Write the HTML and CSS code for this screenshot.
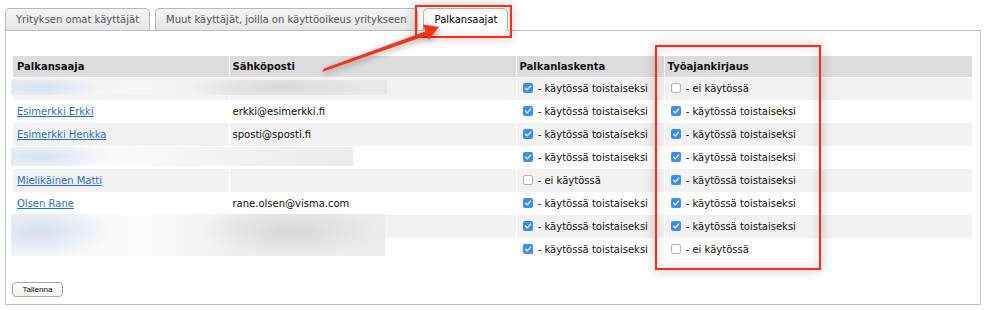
FILE: index.html
```html
<!DOCTYPE html>
<html lang="fi">
<head>
  <meta charset="UTF-8">
  <title>Palkansaajat</title>
  <link rel="stylesheet" href="styles.css">
</head>
<body>
  <div class="page">
    <ul class="tabs">
      <li class="tab">Yrityksen omat käyttäjät</li>
      <li class="tab">Muut käyttäjät, joilla on käyttöoikeus yritykseen</li>
      <li class="tab active">Palkansaajat</li>
    </ul>

    <div class="panel">
      <table class="staff">
        <colgroup>
          <col class="c-name"><col class="c-mail"><col class="c-pay"><col class="c-time">
        </colgroup>
        <thead>
          <tr><th>Palkansaaja</th><th>Sähköposti</th><th>Palkanlaskenta</th><th>Työajankirjaus</th></tr>
        </thead>
        <tbody>
          <tr>
            <td></td><td></td>
            <td><svg class="cb on" viewBox="0 0 10 10"><rect x="0" y="0" width="10" height="10" rx="2"/><path d="M2.6 5.2 L4.3 6.9 L7.6 3.1"/></svg> - käytössä toistaiseksi</td>
            <td><svg class="cb off" viewBox="0 0 10 10"><rect x="0.5" y="0.5" width="9" height="9" rx="1.8"/></svg> - ei käytössä</td>
          </tr>
          <tr>
            <td><a href="#">Esimerkki Erkki</a></td><td>erkki@esimerkki.fi</td>
            <td><svg class="cb on" viewBox="0 0 10 10"><rect x="0" y="0" width="10" height="10" rx="2"/><path d="M2.6 5.2 L4.3 6.9 L7.6 3.1"/></svg> - käytössä toistaiseksi</td>
            <td><svg class="cb on" viewBox="0 0 10 10"><rect x="0" y="0" width="10" height="10" rx="2"/><path d="M2.6 5.2 L4.3 6.9 L7.6 3.1"/></svg> - käytössä toistaiseksi</td>
          </tr>
          <tr>
            <td><a href="#">Esimerkki Henkka</a></td><td>sposti@sposti.fi</td>
            <td><svg class="cb on" viewBox="0 0 10 10"><rect x="0" y="0" width="10" height="10" rx="2"/><path d="M2.6 5.2 L4.3 6.9 L7.6 3.1"/></svg> - käytössä toistaiseksi</td>
            <td><svg class="cb on" viewBox="0 0 10 10"><rect x="0" y="0" width="10" height="10" rx="2"/><path d="M2.6 5.2 L4.3 6.9 L7.6 3.1"/></svg> - käytössä toistaiseksi</td>
          </tr>
          <tr>
            <td></td><td></td>
            <td><svg class="cb on" viewBox="0 0 10 10"><rect x="0" y="0" width="10" height="10" rx="2"/><path d="M2.6 5.2 L4.3 6.9 L7.6 3.1"/></svg> - käytössä toistaiseksi</td>
            <td><svg class="cb on" viewBox="0 0 10 10"><rect x="0" y="0" width="10" height="10" rx="2"/><path d="M2.6 5.2 L4.3 6.9 L7.6 3.1"/></svg> - käytössä toistaiseksi</td>
          </tr>
          <tr>
            <td><a href="#">Mielikäinen Matti</a></td><td></td>
            <td><svg class="cb off" viewBox="0 0 10 10"><rect x="0.5" y="0.5" width="9" height="9" rx="1.8"/></svg> - ei käytössä</td>
            <td><svg class="cb on" viewBox="0 0 10 10"><rect x="0" y="0" width="10" height="10" rx="2"/><path d="M2.6 5.2 L4.3 6.9 L7.6 3.1"/></svg> - käytössä toistaiseksi</td>
          </tr>
          <tr>
            <td><a href="#">Olsen Rane</a></td><td>rane.olsen@visma.com</td>
            <td><svg class="cb on" viewBox="0 0 10 10"><rect x="0" y="0" width="10" height="10" rx="2"/><path d="M2.6 5.2 L4.3 6.9 L7.6 3.1"/></svg> - käytössä toistaiseksi</td>
            <td><svg class="cb on" viewBox="0 0 10 10"><rect x="0" y="0" width="10" height="10" rx="2"/><path d="M2.6 5.2 L4.3 6.9 L7.6 3.1"/></svg> - käytössä toistaiseksi</td>
          </tr>
          <tr>
            <td></td><td></td>
            <td><svg class="cb on" viewBox="0 0 10 10"><rect x="0" y="0" width="10" height="10" rx="2"/><path d="M2.6 5.2 L4.3 6.9 L7.6 3.1"/></svg> - käytössä toistaiseksi</td>
            <td><svg class="cb on" viewBox="0 0 10 10"><rect x="0" y="0" width="10" height="10" rx="2"/><path d="M2.6 5.2 L4.3 6.9 L7.6 3.1"/></svg> - käytössä toistaiseksi</td>
          </tr>
          <tr>
            <td></td><td></td>
            <td><svg class="cb on" viewBox="0 0 10 10"><rect x="0" y="0" width="10" height="10" rx="2"/><path d="M2.6 5.2 L4.3 6.9 L7.6 3.1"/></svg> - käytössä toistaiseksi</td>
            <td><svg class="cb off" viewBox="0 0 10 10"><rect x="0.5" y="0.5" width="9" height="9" rx="1.8"/></svg> - ei käytössä</td>
          </tr>
        </tbody>
      </table>

      <button class="save" type="button">Tallenna</button>

      <!-- blurred-out names / emails -->
      <div class="redact r1"></div>
      <div class="redact r2"></div>
      <div class="redact r3"></div>
    </div>

    <!-- annotations drawn on top of the screenshot -->
    <div class="mark mark-tab"></div>
    <div class="mark mark-col"></div>
    <svg class="arrow" viewBox="0 0 986 310">
      <path d="M322 72 L324 68.5 L428 30.5 L429.5 34.5 Z"/>
      <polygon points="439,27 423,24.5 428.5,39.5"/>
    </svg>
  </div>
</body>
</html>
```

FILE: styles.css
```css
* { box-sizing: border-box; }
html, body { margin: 0; background: #fff; overflow: hidden; }
body {
  font-family: "DejaVu Sans", Verdana, sans-serif;
  font-size: 10px;
  color: #111;
}
.page { position: relative; width: 986px; height: 310px; }

/* tabs */
.tabs {
  list-style: none;
  margin: 0 0 0 5px;
  padding: 8px 0 0 0;
  display: flex;
  gap: 5px;
  align-items: flex-end;
}
.tab {
  position: relative;
  z-index: 1;
  height: 23px;
  line-height: 21px;
  padding: 0 10px;
  margin-bottom: -1px;
  border: 1px solid #b9b9b9;
  border-bottom-color: #c0c0c0;
  border-radius: 5px 5px 0 0;
  background: linear-gradient(#f4f4f4, #e6e6e6);
  color: #555;
}
.tab.active {
  background: #fff;
  border-bottom-color: #fff;
  color: #000;
  padding: 0 10px 0 11px;
}

/* panel */
.panel {
  position: relative;
  margin: 0 5px;
  border: 1px solid #c2c2c2;
  padding: 25px 8px 6px 7px;
  height: 275px;
}
.staff {
  width: 959px;
  table-layout: fixed;
  border-collapse: collapse;
}
.c-name { width: 216px; }
.c-mail { width: 287px; }
.c-pay { width: 148px; }
.c-time { width: 308px; }
.staff th, .staff td {
  padding: 0 3px;
  border-left: 1px solid #fff;
  text-align: left;
  white-space: nowrap;
  overflow: hidden;
}
.staff th:first-child, .staff td:first-child { border-left: 0; padding-left: 4px; }
.staff th {
  height: 21px;
  background: #dcdcdc;
  font-weight: bold;
  border-bottom: 1px solid #fff;
}
.staff td { height: 23px; }
.staff tbody tr:nth-child(odd) td { background: #f2f2f2; }
.staff a { color: #1f72d2; }

.cb {
  width: 10px;
  height: 10px;
  vertical-align: -1px;
  margin: 0 2px 0 3px;
}
.cb.on rect { fill: #3b8ff2; }
.cb.on path { fill: none; stroke: #fff; stroke-width: 1.3; stroke-linecap: round; stroke-linejoin: round; }
.cb.off rect { fill: #fff; stroke: #9d9d9d; stroke-width: 0.8; }

.save {
  display: block;
  margin: 21px 0 0 -1px;
  width: 51px;
  height: 15px;
  padding: 0;
  border: 1px solid #a9a9a9;
  border-radius: 4px;
  background: linear-gradient(#fff, #f1f1f1);
  font-family: "Liberation Sans", Arial, sans-serif;
  font-size: 8px;
  color: #111;
}

/* redacted cells */
.redact { position: absolute; left: 5px; }
.r1 {
  top: 49px; width: 376px; height: 15px;
  background:
    radial-gradient(ellipse 60px 12px at 30px 50%, #d6e2ef, rgba(255,255,255,0)),
    radial-gradient(ellipse 90px 14px at 270px 50%, #d9d9d9, rgba(255,255,255,0)),
    linear-gradient(90deg, #eef0f3, #f7f7f7 35%, #ececec 60%, #e8e8e8);
}
.r2 {
  top: 116px; width: 342px; height: 19px;
  background:
    radial-gradient(ellipse 70px 14px at 30px 50%, #d8e3ef, rgba(255,255,255,0)),
    linear-gradient(90deg, #f0f3f6, #fbfbfb 30%, #f3f3f3 60%, #ececec);
}
.r3 {
  top: 183px; width: 374px; height: 42px;
  background:
    radial-gradient(ellipse 70px 26px at 30px 40%, #d4e1ef, rgba(255,255,255,0)),
    radial-gradient(ellipse 90px 26px at 280px 40%, #d8d8d8, rgba(255,255,255,0)),
    linear-gradient(90deg, #f2f4f6, #fcfcfc 35%, #efefef 60%, #ececec);
}

/* red annotations */
.mark {
  position: absolute;
  z-index: 3;
  border: 2px solid #ff2b10;
  box-shadow: 0 0 12px rgba(0,0,0,0.2), inset 0 0 12px rgba(0,0,0,0.12);
}
.mark-tab { left: 415px; top: 5px; width: 97px; height: 33px; }
.mark-col { left: 655px; top: 45px; width: 166px; height: 225px; }
.arrow {
  position: absolute;
  z-index: 4;
  left: 0; top: 0;
  width: 986px; height: 310px;
  pointer-events: none;
  filter: drop-shadow(1px 2px 3px rgba(0,0,0,0.35));
}
.arrow path, .arrow polygon { fill: #f8321a; }
```
